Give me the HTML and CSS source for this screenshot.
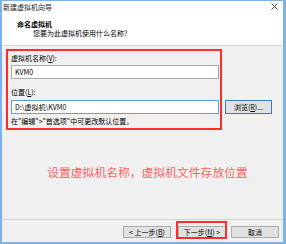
FILE: index.html
```html
<!DOCTYPE html>
<html lang="zh-CN">
<head>
  <meta charset="UTF-8">
  <meta name="viewport" content="width=device-width, initial-scale=1.0">
  <title>新建虚拟机向导</title>
  <link rel="stylesheet" href="styles.css">
</head>
<body>

<!-- 向导窗口 -->
<div class="window">
  <div class="titlebar">
    <span class="title">新建虚拟机向导</span>
    <svg class="close" width="7" height="7" viewBox="0 0 7 7">
      <path d="M0.5 0.5 L6.5 6.5 M6.5 0.5 L0.5 6.5" stroke="#444" stroke-width="1"/>
    </svg>
  </div>

  <div class="header">
    <div class="header-title">命名虚拟机</div>
    <div class="header-sub">您要为此虚拟机使用什么名称?</div>
  </div>

  <div class="body">
    <div class="form">
      <div class="label">虚拟机名称(<u>V</u>):</div>
      <div class="input">KVM0</div>
      <div class="label label-gap">位置(<u>L</u>):</div>
      <div class="row">
        <div class="input focus">D:\虚拟机\KVM0</div>
        <button class="button default">浏览(<u>R</u>)...</button>
      </div>
      <div class="hint">在"编辑"&gt;"首选项"中可更改默认位置。</div>
    </div>

    <div class="note">设置虚拟机名称，虚拟机文件存放位置</div>

    <div class="footer">
      <button class="button">&lt; 上一步(<u>B</u>)</button>
      <button class="button next">下一步(<u>N</u>) &gt;</button>
      <button class="button cancel">取消</button>
    </div>

    <!-- 红色标注框 -->
    <div class="mark mark-form"></div>
    <div class="mark mark-next"></div>
  </div>
</div>

</body>
</html>
```

FILE: styles.css
```css
body {
  margin: 0;
  font-family: "Noto Sans CJK SC", "Noto Sans", sans-serif;
  font-size: 7px;
  color: #000;
}

.window {
  width: 286px;
  height: 244px;
  box-sizing: border-box;
  border: 2px solid #7db2e8;
  border-top-width: 1px;
  border-right-width: 3px;
  background-color: #f0f0f0;
  display: flex;
  flex-direction: column;
}

.titlebar {
  height: 13px;
  background-color: #fff;
  display: flex;
  align-items: center;
  justify-content: space-between;
  padding: 0 5px 0 1px;
  line-height: 9px;
  color: #222;
}

.close {
  margin-top: -2px;
}

.header {
  height: 32px;
  background-color: #fff;
  border-bottom: 1px solid #d9d9d9;
  box-sizing: border-box;
  padding: 6px 0 0 15px;
  line-height: 9px;
}

.header-title {
  font-weight: bold;
}

.header-sub {
  padding-left: 16px;
}

.body {
  flex: 1;
  position: relative;
  display: flex;
  flex-direction: column;
}

.form {
  padding: 8px 0 0 9px;
  line-height: 9px;
}

.label-gap {
  margin-top: 9px;
}

.input {
  width: 208px;
  height: 14px;
  margin-top: 2px;
  box-sizing: border-box;
  border: 1px solid #aaa;
  background-color: #fff;
  padding-left: 3px;
  line-height: 12px;
}

.input.focus {
  border-color: #5aa2e6;
  margin-top: 0;
}

.row {
  display: flex;
  margin-top: 3px;
}

.button {
  font-family: inherit;
  font-size: 7px;
  height: 12px;
  width: 48px;
  padding: 0;
  line-height: 10px;
  border: 1px solid #adadad;
  background-color: #e1e1e1;
  color: #000;
}

.button.default {
  height: 14px;
  width: 47px;
  margin-left: 6px;
  border-color: #2f7fd0;
}

.hint {
  margin-top: 3px;
}

.note {
  margin-top: 38px;
  padding-left: 10px;
  text-align: center;
  font-size: 11.8px;
  line-height: 16px;
  color: #ff5f5f;
}

.footer {
  margin-top: auto;
  height: 23px;
  border-top: 1px solid #d5d5d5;
  display: flex;
  justify-content: flex-end;
  padding: 6px 4px 0 0;
  box-sizing: border-box;
}

.next {
  margin-left: 7px;
}

.cancel {
  margin-left: 5px;
}

.mark {
  position: absolute;
  border: 2px solid #ff2d2d;
  box-sizing: border-box;
}

.mark-form {
  left: 4px;
  top: 3px;
  width: 216px;
  height: 81px;
}

.mark-next {
  left: 174px;
  top: 175px;
  width: 51px;
  height: 18px;
}
```
